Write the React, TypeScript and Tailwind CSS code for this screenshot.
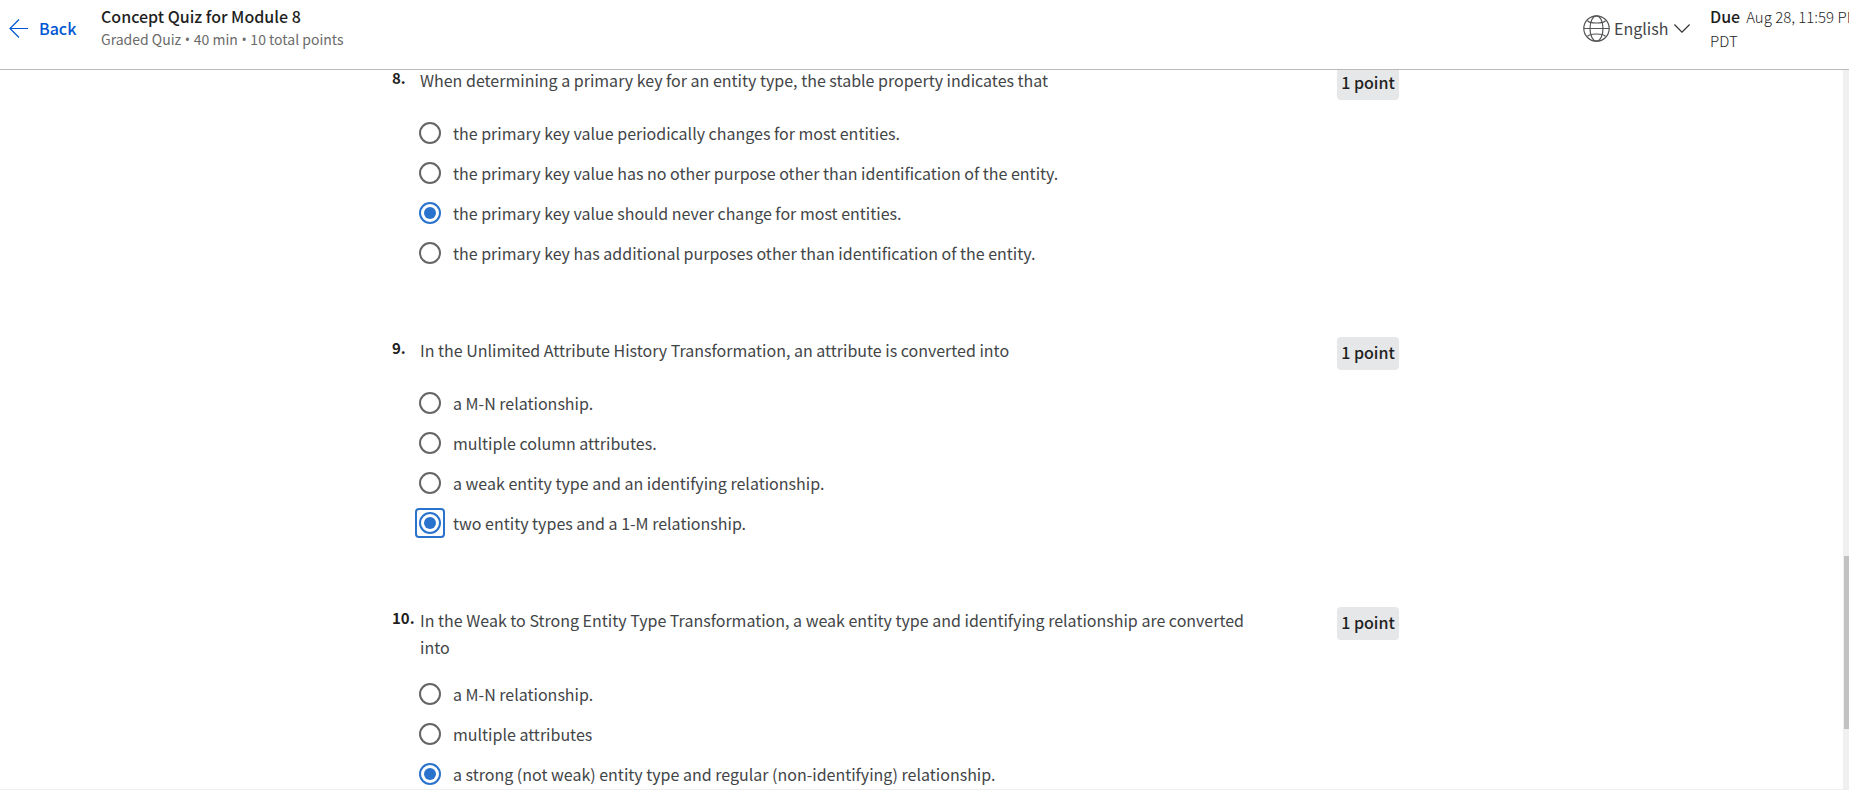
import { useState } from "react";
import clsx from "clsx";

type Question = {
  number: number;
  text: string;
  options: string[];
  selected: number;
  focused?: number;
};

const questions: Question[] = [
  {
    number: 8,
    text: "When determining a primary key for an entity type, the stable property indicates that",
    options: [
      "the primary key value periodically changes for most entities.",
      "the primary key value has no other purpose other than identification of the entity.",
      "the primary key value should never change for most entities.",
      "the primary key has additional purposes other than identification of the entity.",
    ],
    selected: 2,
  },
  {
    number: 9,
    text: "In the Unlimited Attribute History Transformation, an attribute is converted into",
    options: [
      "a M-N relationship.",
      "multiple column attributes.",
      "a weak entity type and an identifying relationship.",
      "two entity types and a 1-M relationship.",
    ],
    selected: 3,
    focused: 3,
  },
  {
    number: 10,
    text: "In the Weak to Strong Entity Type Transformation, a weak entity type and identifying relationship are converted into",
    options: [
      "a M-N relationship.",
      "multiple attributes",
      "a strong (not weak) entity type and regular (non-identifying) relationship.",
    ],
    selected: 2,
  },
];

function Bullet() {
  return <span className="font-['Open_Sans',sans-serif] leading-none"> • </span>;
}

function QuestionBlock({ question }: { question: Question }) {
  const [selected, setSelected] = useState(question.selected);
  return (
    <fieldset aria-labelledby={`question-${question.number}`}>
      <div className="mb-[13px] flex items-start">
        <span className="w-7 shrink-0 text-[15px] leading-[22px] font-bold text-[#1f1f1f]">{question.number}.</span>
        <p id={`question-${question.number}`} className="flex-1">
          {question.text}
        </p>
        <span className="ml-16 w-[62px] shrink-0 rounded bg-[#e5e7e8] pb-0.5 text-center leading-[31px] font-medium text-[#1f1f1f]">
          1 point
        </span>
      </div>
      {question.options.map((option, index) => (
        <label key={option} className="ml-[23px] flex h-10 items-center gap-2">
          <span
            className={clsx(
              "grid size-[30px] shrink-0 place-items-center rounded border-2",
              question.focused === index ? "border-[#2a73cc]" : "border-transparent",
            )}
          >
            <input
              type="radio"
              name={`question-${question.number}`}
              checked={selected === index}
              onChange={() => setSelected(index)}
              className="grid size-[22px] appearance-none place-items-center rounded-full border-2 border-[#666] outline-none before:size-3 before:rounded-full checked:border-[#2a73cc] checked:before:bg-[#2a73cc]"
            />
          </span>
          {option}
        </label>
      ))}
    </fieldset>
  );
}

export default function App() {
  return (
    <div className="flex h-screen flex-col overflow-hidden border-b border-[#eee] bg-white font-['Noto_Sans_CJK_SC',sans-serif] text-base leading-[27px] font-normal text-[#424547]">
      <header className="flex h-[70px] shrink-0 items-start overflow-hidden border-b border-[#bbb] pl-[9px]">
        <a href="#" className="flex h-14 w-[92px] shrink-0 items-center gap-[11px] font-medium text-[#0056d2]">
          <svg viewBox="0 0 19 19" className="size-[19px]" fill="none" stroke="currentColor" strokeWidth="1.2">
            <path d="M19 9.5H1M10 .5l-9 9 9 9" />
          </svg>
          Back
        </a>
        <div className="pt-1">
          <h1 className="text-base leading-6 font-medium text-[#1f1f1f]">Concept Quiz for Module 8</h1>
          <p className="text-sm leading-[22px] text-[#6b6b6b]">
            Graded Quiz
            <Bullet />
            40 min
            <Bullet />
            10 total points
          </p>
        </div>
        <div className="ml-auto flex h-[57px] shrink-0 items-center">
          <svg viewBox="0 0 27 27" className="size-[27px]" fill="none" stroke="#555" strokeWidth="1.2" aria-hidden="true">
            <circle cx="13.5" cy="13.5" r="12.7" />
            <ellipse cx="13.5" cy="13.5" rx="6.5" ry="12.7" />
            <path d="M.8 13.5h25.4M4.5 5.6q1.5 2.4 9 2.4t9-2.4M4.5 21.4q1.5-2.4 9-2.4t9 2.4" />
          </svg>
          <select aria-label="Language" className="ml-1 w-[60px] appearance-none outline-none">
            <option>English</option>
          </select>
          <svg viewBox="0 0 16 9" className="h-[9px] w-4" fill="none" stroke="#333" strokeWidth="1.2" aria-hidden="true">
            <path d="M.4.5 8 8.2 15.6.5" />
          </svg>
        </div>
        <div className="ml-5 w-[139px] shrink-0 pt-1 text-[15px] leading-6 font-light text-[#1f1f1f]">
          <p className="whitespace-nowrap">
            <strong className="mr-1.5 text-base leading-6 font-medium">Due</strong>
            Aug 28, 11:59 PM
          </p>
          <p>PDT</p>
        </div>
      </header>
      <div className="flex min-h-0 flex-1">
        <main className="min-w-0 flex-1 overflow-hidden">
          <form className="mx-auto -mt-[3px] flex max-w-[1059px] flex-col gap-16 pr-[52px]">
            {questions.map((question) => (
              <QuestionBlock key={question.number} question={question} />
            ))}
          </form>
        </main>
        <div className="flex w-1.5 shrink-0 flex-col bg-[#f0f0f0] pl-px" aria-hidden="true">
          <div className="grow-[486]" />
          <div className="grow-[173] bg-[#c1c1c1]" />
          <div className="grow-[60]" />
        </div>
      </div>
    </div>
  );
}
